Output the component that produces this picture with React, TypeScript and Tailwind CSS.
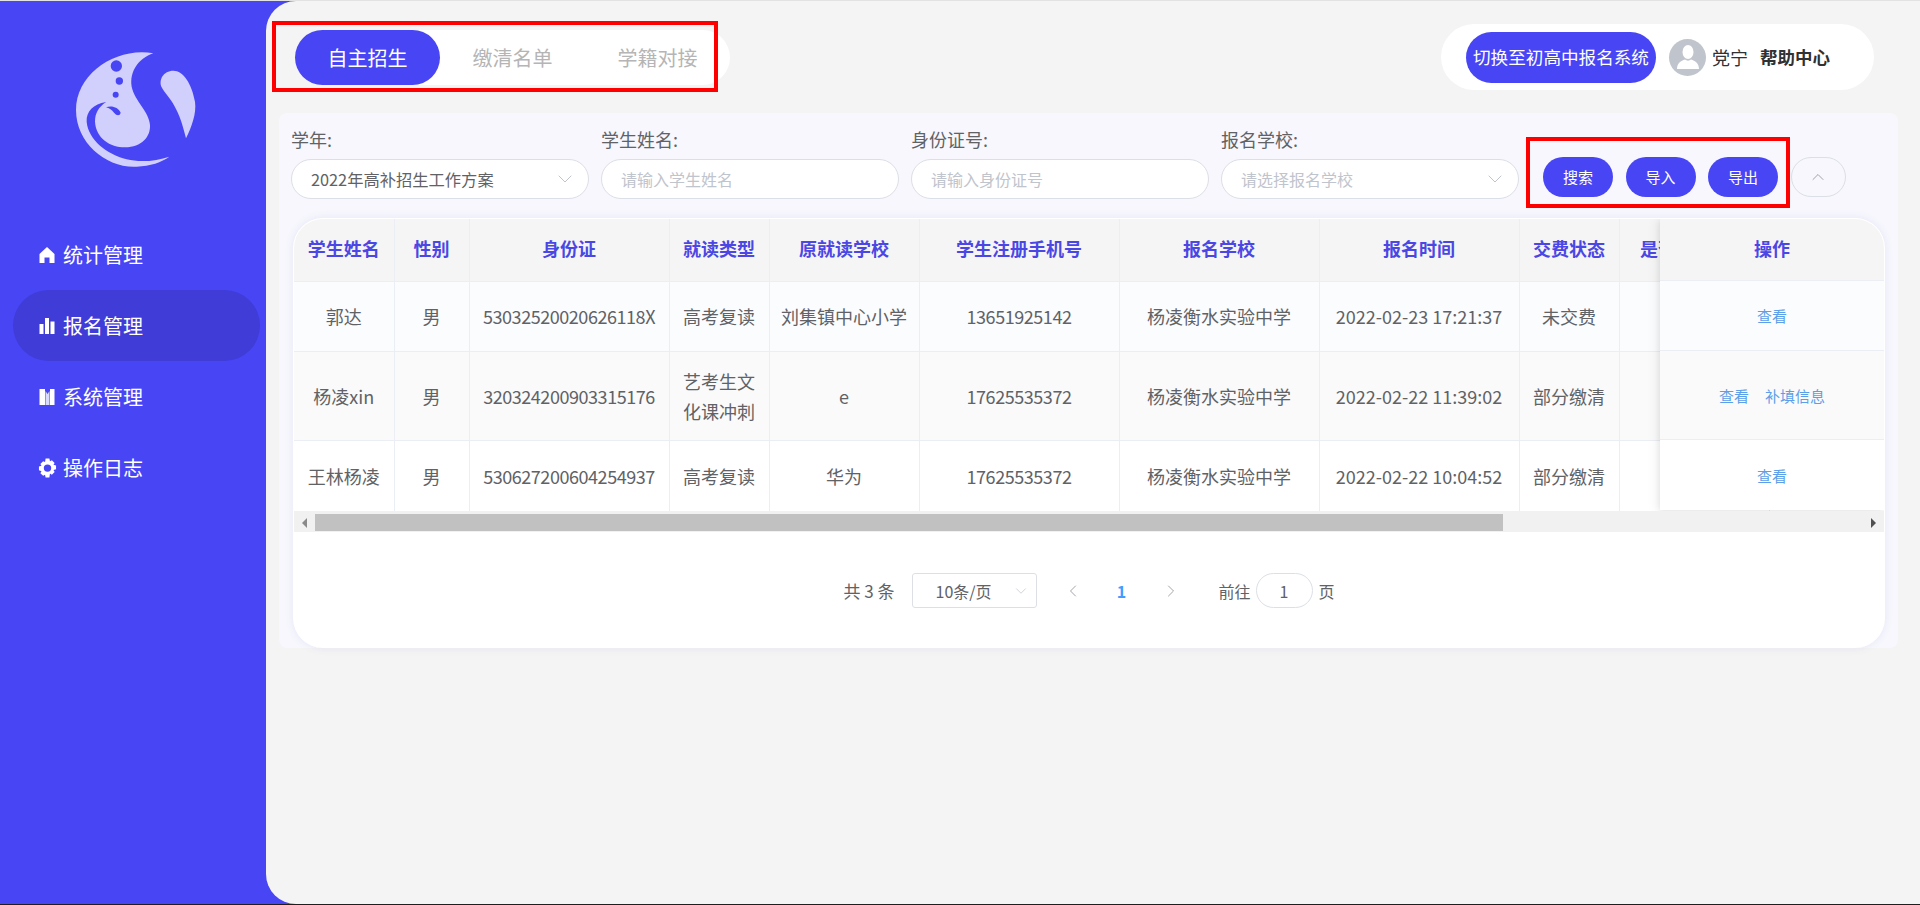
import React from "react";
import { ChevronDown, ChevronUp, ChevronLeft, ChevronRight } from "lucide-react";

const FONT = '"Noto Sans CJK SC", "Noto Sans", sans-serif';

function Logo() {
  return (
    <svg width="170" height="150" viewBox="0 0 510 450" className="block">
      <path
        fill="#d1cffb"
        d="M310 70 C200 50 78 130 78 240 C78 340 170 415 260 410 C300 408 335 397 358 380 C320 393 270 398 230 388 C170 372 115 330 110 275 C108 245 130 222 168 216 C145 232 135 250 135 275 C138 325 180 352 225 352 C275 352 302 320 300 285 C298 245 255 215 245 170 C238 125 265 85 310 70 Z"
      />
      <circle cx="199" cy="108" r="17" fill="#4845f5" />
      <circle cx="208" cy="153" r="11" fill="#4845f5" />
      <circle cx="197" cy="194" r="9" fill="#4845f5" />
      <path fill="#4845f5" d="M168 232 C185 226 205 232 212 248 C210 258 200 258 192 248 C186 240 178 234 168 232 Z" />
      <path
        fill="#d1cffb"
        d="M370 122 C340 122 325 150 335 172 C350 200 385 220 408 325 C425 290 440 250 435 215 C425 160 400 122 370 122 Z"
      />
    </svg>
  );
}

function HomeIcon() {
  return (
    <svg width="16" height="18" viewBox="0 0 16 18" fill="#fff">
      <path d="M8 1 15.5 8V17H10.5V11.5H5.5V17H.5V8Z" />
    </svg>
  );
}
function BarsIcon() {
  return (
    <svg width="16" height="18" viewBox="0 0 16 18" fill="#fff">
      <rect x="0.5" y="7" width="4" height="10" />
      <rect x="6" y="1" width="4" height="16" />
      <rect x="11.5" y="4.5" width="4" height="12.5" />
    </svg>
  );
}
function BookIcon() {
  return (
    <svg width="16" height="18" viewBox="0 0 16 18" fill="#fff">
      <rect x="0.5" y="1" width="5.5" height="16" />
      <path d="M6.5 3 8.5 6 10.5 3 V17 H6.5 Z" opacity="0.8" />
      <rect x="11" y="1" width="4.5" height="16" />
    </svg>
  );
}
function GearIcon() {
  return (
    <svg width="19" height="20" viewBox="0 0 20 20">
      <path
        fill="#fff"
        fillRule="evenodd"
        d="M8 0h4l.6 2.8 2-1 2.9 2.9-1.2 2 2.7.7v4l-2.7.8 1.2 2-2.9 2.8-2-1.1L12 20H8l-.6-2.9-2 1.1-2.9-2.8 1.2-2L1 12.4v-4l2.7-.7-1.2-2 2.9-2.9 2 1zM10 6.2a3.9 3.9 0 1 0 0 7.8 3.9 3.9 0 0 0 0-7.8z"
      />
    </svg>
  );
}

const menu = [
  { label: "统计管理", icon: <HomeIcon />, active: false },
  { label: "报名管理", icon: <BarsIcon />, active: true },
  { label: "系统管理", icon: <BookIcon />, active: false },
  { label: "操作日志", icon: <GearIcon />, active: false },
];

function Sidebar() {
  return (
    <aside className="w-[266px] shrink-0 flex flex-col">
      <div className="ml-[50px] mt-[29px] h-[189px]">
        <Logo />
      </div>
      <nav className="flex flex-col">
        {menu.map((m) => (
          <div
            key={m.label}
            className={
              m.active
                ? "ml-[13px] mr-[6px] h-[71px] rounded-[36px] bg-[#3f3cd8] flex items-center text-white text-[20px]"
                : "ml-[13px] mr-[6px] h-[71px] flex items-center text-white text-[20px]"
            }
          >
            <span className="ml-[24px] w-[20px] flex items-center justify-center">{m.icon}</span>
            <span className="ml-[6px]">{m.label}</span>
          </div>
        ))}
      </nav>
    </aside>
  );
}

function Header() {
  return (
    <header className="h-[112px] shrink-0 flex items-start justify-between pl-[29px] pr-[46px]">
      <div className="mt-[29px] h-[55px] w-[435px] bg-white rounded-[28px] flex items-center text-[20px]">
        <div className="w-[145px] h-full rounded-[28px] bg-[#4845f5] text-white flex items-center justify-center">自主招生</div>
        <div className="w-[145px] text-center text-[#b5b5b5]">缴清名单</div>
        <div className="w-[145px] text-center text-[#b5b5b5]">学籍对接</div>
      </div>
      <div className="mt-[23px] h-[66px] w-[433px] bg-white rounded-[33px] flex items-center pl-[25px]">
        <button className="w-[190px] h-[51px] rounded-[26px] bg-[#4845f5] text-white text-[17.6px] whitespace-nowrap flex items-center justify-center">
          切换至初高中报名系统
        </button>
        <span className="ml-[13px] w-[37px] h-[37px] rounded-full bg-[#c0c4cc] flex items-center justify-center overflow-hidden">
          <svg width="24" height="26" viewBox="0 0 24 26" fill="#fff">
            <ellipse cx="12" cy="8" rx="5.5" ry="7" />
            <path d="M1 25 C1 19 5 17 9 15.5 C10.5 17 13.5 17 15 15.5 C19 17 23 19 23 25 Z" />
          </svg>
        </span>
        <span className="ml-[6px] text-[18px] text-[#303133]">党宁</span>
        <span className="ml-[12px] text-[17.5px] font-bold text-[#303133]">帮助中心</span>
      </div>
    </header>
  );
}

function Field({ label, children }: { label: string; children: React.ReactNode }) {
  return (
    <div className="w-[298px] mr-[12px] shrink-0">
      <div className="h-[36px] pb-[5px] flex items-center text-[18px] text-[#606266] leading-none">{label}</div>
      {children}
    </div>
  );
}

function SelectBox({ text, placeholder }: { text: string; placeholder?: boolean }) {
  return (
    <div className="h-[40px] rounded-[20px] border border-[#dcdfe6] bg-white flex items-center justify-between pl-[19px] pr-[11px]">
      <span className={placeholder ? "text-[16px] text-[#c0c4cc]" : "text-[16.3px] text-[#606266]"}>{text}</span>
      <ChevronDown size={24} strokeWidth={1} className="text-[#c0c4cc]" />
    </div>
  );
}

function InputBox({ placeholder }: { placeholder: string }) {
  return (
    <div className="h-[40px] rounded-[20px] border border-[#dcdfe6] bg-white flex items-center pl-[19px]">
      <span className="text-[16px] text-[#c0c4cc]">{placeholder}</span>
    </div>
  );
}

function Filters() {
  return (
    <div className="flex items-start pl-[12px] pt-[10px]">
      <Field label="学年:">
        <SelectBox text="2022年高补招生工作方案" />
      </Field>
      <Field label="学生姓名:">
        <InputBox placeholder="请输入学生姓名" />
      </Field>
      <Field label="身份证号:">
        <InputBox placeholder="请输入身份证号" />
      </Field>
      <Field label="报名学校:">
        <SelectBox text="请选择报名学校" placeholder />
      </Field>
      <div className="flex items-center ml-[12px] mt-[34px] gap-[12.5px]">
        {["搜索", "导入", "导出"].map((t) => (
          <button key={t} className="w-[70px] h-[40px] rounded-[20px] bg-[#4845f5] text-white text-[15px] flex items-center justify-center">
            {t}
          </button>
        ))}
        <button className="w-[55px] h-[40px] rounded-[20px] border border-[#dcdfe6] flex items-center justify-center">
          <ChevronUp size={20} strokeWidth={1} className="text-[#909399]" />
        </button>
      </div>
    </div>
  );
}

const columns = [
  { label: "学生姓名", w: 100 },
  { label: "性别", w: 75 },
  { label: "身份证", w: 200 },
  { label: "就读类型", w: 100 },
  { label: "原就读学校", w: 150 },
  { label: "学生注册手机号", w: 200 },
  { label: "报名学校", w: 200 },
  { label: "报名时间", w: 200 },
  { label: "交费状态", w: 100 },
  { label: "是否补填信息", w: 150 },
];

const rows = [
  { h: "h-[70px]", bg: "bg-[#fbfcfe]", cells: ["郭达", "男", "53032520020626118X", "高考复读", "刘集镇中心小学", "13651925142", "杨凌衡水实验中学", "2022-02-23 17:21:37", "未交费", ""], ops: ["查看"] },
  { h: "h-[89px]", bg: "bg-[#fafafa]", cells: ["杨凌xin", "男", "320324200903315176", "艺考生文化课冲刺", "e", "17625535372", "杨凌衡水实验中学", "2022-02-22 11:39:02", "部分缴清", ""], ops: ["查看", "补填信息"] },
  { h: "h-[71px]", bg: "bg-white", cells: ["王林杨凌", "男", "530627200604254937", "高考复读", "华为", "17625535372", "杨凌衡水实验中学", "2022-02-22 10:04:52", "部分缴清", ""], ops: ["查看"] },
];

function DataTable() {
  return (
    <div className="relative overflow-hidden h-[292px]">
      <table className="table-fixed border-collapse w-[1475px] text-[18px] text-[#606266]">
        <colgroup>
          {columns.map((c) => (
            <col key={c.label} style={{ width: c.w }} />
          ))}
        </colgroup>
        <thead>
          <tr className="h-[62px] bg-[#f5f5f5]">
            {columns.map((c) => (
              <th key={c.label} className="border-r border-b border-[#ebeef5] font-bold text-[18px] text-[#4b47e4] p-0 whitespace-nowrap">
                <span className="relative top-[-1px]">{c.label}</span>
              </th>
            ))}
          </tr>
        </thead>
        <tbody>
          {rows.map((r, i) => (
            <tr key={i} className={r.h + " " + r.bg}>
              {r.cells.map((c, j) => (
                <td
                  key={j}
                  className={
                    j === 2 || j === 5
                      ? "border-r border-b border-[#ebeef5] text-center p-0 px-[9px] leading-[30px] tracking-[-0.45px]"
                      : "border-r border-b border-[#ebeef5] text-center p-0 px-[9px] leading-[30px] break-all"
                  }
                >
                  {c}
                </td>
              ))}
            </tr>
          ))}
        </tbody>
      </table>
      <div className="absolute top-0 right-0 w-[224px] shadow-[-4px_0_10px_rgba(0,0,0,0.06),0_2px_6px_rgba(0,0,0,0.08)]">
        <div className="h-[62px] bg-[#f5f5f5] border-b border-[#ebeef5] flex items-center justify-center font-bold text-[18px] text-[#4b47e4]">
          <span className="relative top-[-1px]">操作</span>
        </div>
        {rows.map((r, i) => (
          <div
            key={i}
            className={
              i === 0
                ? "h-[70px] pt-[2px] bg-[#fbfcfe] border-b border-[#ebeef5] flex items-center justify-center gap-[16px] text-[15px] text-[#5c9fe8]"
                : i === 1
                ? "h-[89px] pt-[2px] bg-[#fafafa] border-b border-[#ebeef5] flex items-center justify-center gap-[16px] text-[15px] text-[#5c9fe8]"
                : "h-[70px] pt-[2px] bg-white flex items-center justify-center gap-[16px] text-[15px] text-[#5c9fe8]"
            }
          >
            {r.ops.map((o) => (
              <span key={o}>{o}</span>
            ))}
          </div>
        ))}
      </div>
    </div>
  );
}

function ScrollBar() {
  return (
    <div className="h-[21px] bg-[#f1f1f1] flex items-start pt-[3px]">
      <div className="w-[21px] h-[17px] flex items-center justify-center">
        <svg width="6" height="10" viewBox="0 0 6 10" fill="#8a8a8a">
          <path d="M5 0V10L0 5Z" />
        </svg>
      </div>
      <div className="w-[1188px] h-[17px] bg-[#c1c1c1]" />
      <div className="flex-1 h-[17px] flex items-center justify-end pr-[7px]">
        <svg width="6" height="10" viewBox="0 0 6 10" fill="#505050">
          <path d="M0 0V10L5 5Z" />
        </svg>
      </div>
    </div>
  );
}

function Pagination() {
  return (
    <div className="flex justify-center items-start pt-[41px] text-[16px] text-[#606266]">
      <span className="h-[35px] flex items-center mr-[17px] text-[17px]">共&nbsp;3&nbsp;条</span>
      <div className="w-[125px] h-[35px] rounded-[3px] border border-[#dcdfe6] flex items-center justify-between pl-[23px] pr-[6px]">
        <span>10条/页</span>
        <ChevronDown size={18} strokeWidth={1} className="text-[#c0c4cc]" />
      </div>
      <div className="ml-[12px] w-[48px] h-[35px] flex items-center justify-center">
        <ChevronLeft size={20} strokeWidth={1} className="text-[#909399]" />
      </div>
      <div className="w-[50px] h-[35px] flex items-center justify-center font-bold text-[#409eff]">1</div>
      <div className="w-[48px] h-[35px] flex items-center justify-center">
        <ChevronRight size={20} strokeWidth={1} className="text-[#909399]" />
      </div>
      <span className="ml-[24px] h-[35px] flex items-center">前往</span>
      <div className="ml-[5px] w-[57px] h-[35px] rounded-[18px] border border-[#dcdfe6] flex items-center justify-center">1</div>
      <span className="ml-[6px] h-[35px] flex items-center">页</span>
    </div>
  );
}

export default function App() {
  return (
    <div className="relative w-full h-[905px] flex flex-col bg-[#4845f5] overflow-hidden" style={{ fontFamily: FONT }}>
      <div className="h-px bg-[#e2e2e2] shrink-0" />
      <div className="flex-1 flex min-h-0">
        <Sidebar />
        <main className="flex-1 min-w-0 bg-[#f4f4f4] rounded-l-[30px] flex flex-col">
          <Header />
          <section className="ml-[13px] mr-[22px] h-[535px] bg-[#f7f7fd] rounded-[8px] flex flex-col">
            <Filters />
            <div className="mt-[19px] ml-[14px] mr-[13px] h-[430px] bg-white border border-white border-b-0 rounded-[30px] overflow-hidden shadow-[0_0_8px_rgba(90,90,200,0.1)] flex flex-col">
              <DataTable />
              <ScrollBar />
              <Pagination />
            </div>
          </section>
        </main>
      </div>
      <div className="h-px bg-[#1e1e1e] shrink-0" />
      <div className="absolute left-[272px] top-[21px] w-[446px] h-[71px] border-[4px] border-[#f00]" />
      <div className="absolute left-[1526px] top-[137px] w-[264px] h-[71px] border-[4px] border-[#f00]" />
    </div>
  );
}
